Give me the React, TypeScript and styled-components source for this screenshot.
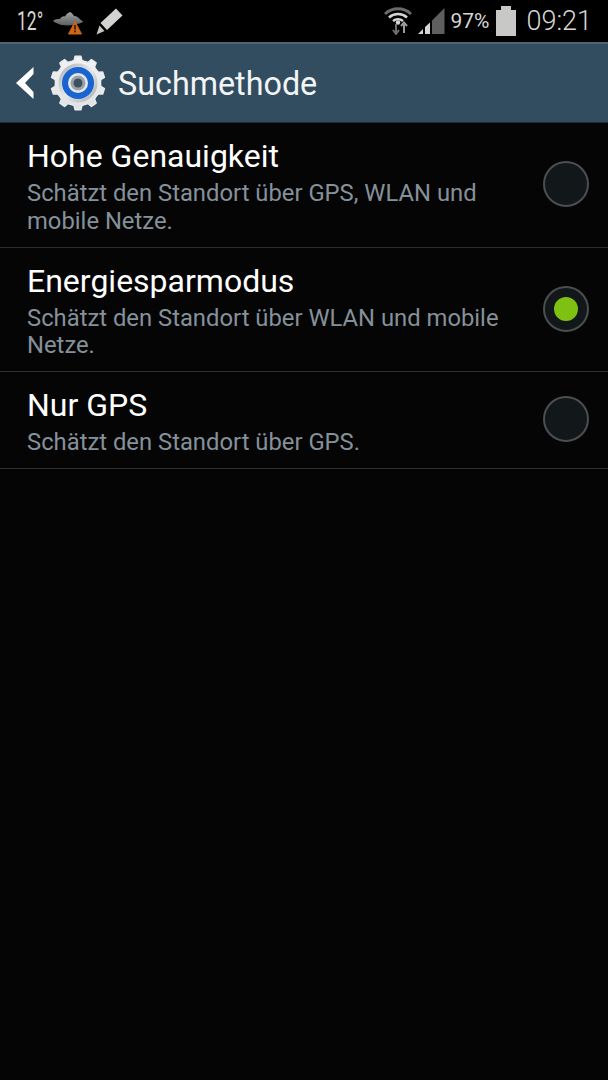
import React from 'react';
import styled, { createGlobalStyle } from 'styled-components';

const GlobalStyle = createGlobalStyle`
    html, body {
        margin: 0;
        padding: 0;
        background: #050505;
    }
    body {
        font-family: Roboto, 'Liberation Sans', sans-serif;
    }
`;

const METHODS = [
    { title: 'Hohe Genauigkeit', text: 'Schätzt den Standort über GPS, WLAN und mobile Netze.', selected: false },
    { title: 'Energiesparmodus', text: 'Schätzt den Standort über WLAN und mobile Netze.', selected: true },
    { title: 'Nur GPS', text: 'Schätzt den Standort über GPS.', selected: false },
];

const gearPoints = () => {
    const teeth = 10;
    const step = (Math.PI * 2) / teeth;
    const points: string[] = [];
    for (let i = 0; i < teeth; i++) {
        const a = i * step;
        const corners: [number, number][] = [
            [22.5, a - step * 0.5],
            [23, a - step * 0.27],
            [27, a - step * 0.17],
            [27, a + step * 0.17],
            [23, a + step * 0.27],
        ];
        corners.forEach(([r, t]) => {
            points.push(`${(28 + r * Math.sin(t)).toFixed(2)},${(28 - r * Math.cos(t)).toFixed(2)}`);
        });
    }
    return points.join(' ');
};

const SettingsGear = () => (
    <GearSvg viewBox="0 0 56 56">
        <defs>
            <linearGradient id="gearFill" x1="0" y1="0" x2="0" y2="1">
                <stop offset="0" stopColor="#f2f3f4" />
                <stop offset="1" stopColor="#dfe1e3" />
            </linearGradient>
            <linearGradient id="gearRim" x1="0" y1="0" x2="1" y2="1">
                <stop offset="0" stopColor="#a9aeb2" />
                <stop offset="0.5" stopColor="#e6e8ea" />
                <stop offset="1" stopColor="#a4a9ad" />
            </linearGradient>
        </defs>
        <polygon points={gearPoints()} fill="url(#gearFill)" stroke="#e9ebec" strokeWidth="1.5" strokeLinejoin="round" />
        <circle cx="28" cy="28" r="19.5" fill="url(#gearRim)" />
        <circle cx="28" cy="28" r="16" fill="#1865d2" />
        <circle cx="28" cy="28" r="10" fill="#e6e8ea" />
        <circle cx="28" cy="28" r="7.5" fill="#9ba1a6" />
        <circle cx="28" cy="28" r="4.5" fill="#3b5162" />
    </GearSvg>
);

const App: React.FC = () => (
    <>
        <GlobalStyle />
        <Screen>
            <StatusBar>
                <StatusLeft>
                    <Temperature>12°</Temperature>
                    <CloudSvg width="31" height="24" viewBox="0 0 31 24">
                        <defs>
                            <linearGradient id="cloudFill" x1="0" y1="0" x2="0" y2="1">
                                <stop offset="0" stopColor="#a2a4a3" />
                                <stop offset="1" stopColor="#5d5f5f" />
                            </linearGradient>
                        </defs>
                        <path
                            d="M0 10 C2 8 5 8 7 8 C8 6 10 5 12 5.5 C13 3 15 2 17 1 C19 2 20 3 21 5 C24 5 26 7 27 8.5 C28.5 9 29.5 10 30 11 C27 12.5 24 13 21 13.5 C17 15 13 14.5 9 14 C6 13.5 3 12 0 10 Z"
                            fill="url(#cloudFill)"
                        />
                        <path d="M22 10.5 L28.5 23 L15.5 23 Z" fill="#cf6414" stroke="#cf6414" strokeLinejoin="round" />
                        <rect x="21.2" y="14" width="1.6" height="4.5" fill="#2b1a0c" />
                        <rect x="21.2" y="19.5" width="1.6" height="1.8" fill="#2b1a0c" />
                    </CloudSvg>
                    <PencilSvg width="27" height="27" viewBox="0 0 27 27">
                        <path d="M20 0.5 L26.5 7.5 L11 22 L4.5 15 Z" fill="#d3d3d1" />
                        <path d="M3.5 17.5 L8.5 23 L0.5 26.5 Z" fill="#c4c4c2" />
                    </PencilSvg>
                </StatusLeft>
                <StatusRight>
                    <svg width="28" height="28" viewBox="0 0 28 28">
                        <path d="M1 7 A19 19 0 0 1 27 7" fill="none" stroke="#6a6a6a" strokeWidth="3" />
                        <path d="M5 10.5 A13.5 13.5 0 0 1 23 10.5" fill="none" stroke="#d6d6d4" strokeWidth="2.6" />
                        <path d="M9 14 A8 8 0 0 1 19 14" fill="none" stroke="#d6d6d4" strokeWidth="2.4" />
                        <circle cx="14" cy="15.5" r="2.2" fill="#d6d6d4" />
                        <path d="M12 17 V26 M9 23 L12 27 L15 23" fill="none" stroke="#6e6e6e" strokeWidth="2" />
                        <path d="M20 26 V16 M17 19 L20 15.5 L23 19" fill="none" stroke="#9a9a9a" strokeWidth="2" />
                    </svg>
                    <SignalSvg width="27" height="26" viewBox="0 0 27 26">
                        <path d="M0 26 L5 21 V26 Z" fill="#d6d6d4" />
                        <path d="M7 19 L12 14.5 V26 H7 Z" fill="#d6d6d4" />
                        <path d="M14 12.5 L26.5 0 V26 H14 Z" fill="#5f5f5f" />
                    </SignalSvg>
                    <BatteryText>97%</BatteryText>
                    <Battery />
                    <Clock>09:21</Clock>
                </StatusRight>
            </StatusBar>
            <ActionBar>
                <svg width="18" height="32" viewBox="0 0 18 32">
                    <path d="M0 16 L17.5 0 V7 L9 16 L17.5 25 V32 Z" fill="#fff" />
                </svg>
                <SettingsGear />
                <ActionTitle>Suchmethode</ActionTitle>
            </ActionBar>
            <List>
                {METHODS.map((method) => (
                    <Row key={method.title}>
                        <RowText>
                            <RowTitle>{method.title}</RowTitle>
                            <RowDescription>{method.text}</RowDescription>
                        </RowText>
                        <Radio>{method.selected && <RadioDot />}</Radio>
                    </Row>
                ))}
            </List>
        </Screen>
    </>
);

const Screen = styled.div`
    width: 608px;
    height: 1080px;
    background: #050505;
    overflow: hidden;
`;

const StatusBar = styled.div`
    height: 42px;
    background: #000;
    display: flex;
    align-items: center;
    justify-content: space-between;
    padding: 0 16px 0 17px;
    color: #d6d6d4;
`;

const StatusLeft = styled.div`
    display: flex;
    align-items: center;
`;

const StatusRight = styled.div`
    display: flex;
    align-items: center;
`;

const Temperature = styled.span`
    display: inline-block;
    width: 36px;
    font-size: 25px;
    transform: scaleX(0.7);
    transform-origin: left center;
`;

const CloudSvg = styled.svg`
    margin-top: 4px;
`;

const PencilSvg = styled.svg`
    margin: 0 0 0 12px;
`;

const SignalSvg = styled.svg`
    margin-left: 6px;
`;

const BatteryText = styled.span`
    font-size: 21px;
    margin-left: 5px;
`;

const Battery = styled.div`
    position: relative;
    width: 20px;
    height: 26px;
    margin: 4px 0 0 7px;
    background: #c8c8c6;
    &::before {
        content: '';
        position: absolute;
        top: -4px;
        left: 5px;
        width: 10px;
        height: 4px;
        background: #c8c8c6;
    }
`;

const Clock = styled.span`
    font-size: 27px;
    font-weight: 300;
    margin-left: 10px;
    color: #d6d6d4;
`;

const ActionBar = styled.div`
    height: 78px;
    border-top: 2px solid #4a6577;
    border-bottom: 1px solid #1c2a35;
    background: #324c60;
    display: flex;
    align-items: center;
    padding-left: 16px;
`;

const GearSvg = styled.svg`
    width: 56px;
    height: 56px;
    margin-left: 16px;
`;

const ActionTitle = styled.span`
    font-size: 32.3px;
    color: #f2f4f5;
    margin: 2px 0 0 12px;
`;

const List = styled.div`
    display: flex;
    flex-direction: column;
`;

const Row = styled.div`
    display: flex;
    align-items: center;
    justify-content: space-between;
    padding: 12px 19px 11px 27px;
    border-bottom: 1px solid #2c2c2c;
`;

const RowText = styled.div`
    width: 490px;
`;

const RowTitle = styled.div`
    font-size: 32px;
    line-height: 42px;
    color: #fff;
`;

const RowDescription = styled.div`
    margin-top: 3px;
    font-size: 23.8px;
    line-height: 27.75px;
    color: #85919a;
`;

const Radio = styled.div`
    width: 46px;
    height: 46px;
    margin-bottom: 2px;
    box-sizing: border-box;
    border: 2px solid #4c4e50;
    border-radius: 50%;
    background: #12171a;
    display: flex;
    align-items: center;
    justify-content: center;
`;

const RadioDot = styled.div`
    width: 24px;
    height: 24px;
    border-radius: 50%;
    background: #7fc113;
`;

export default App;
